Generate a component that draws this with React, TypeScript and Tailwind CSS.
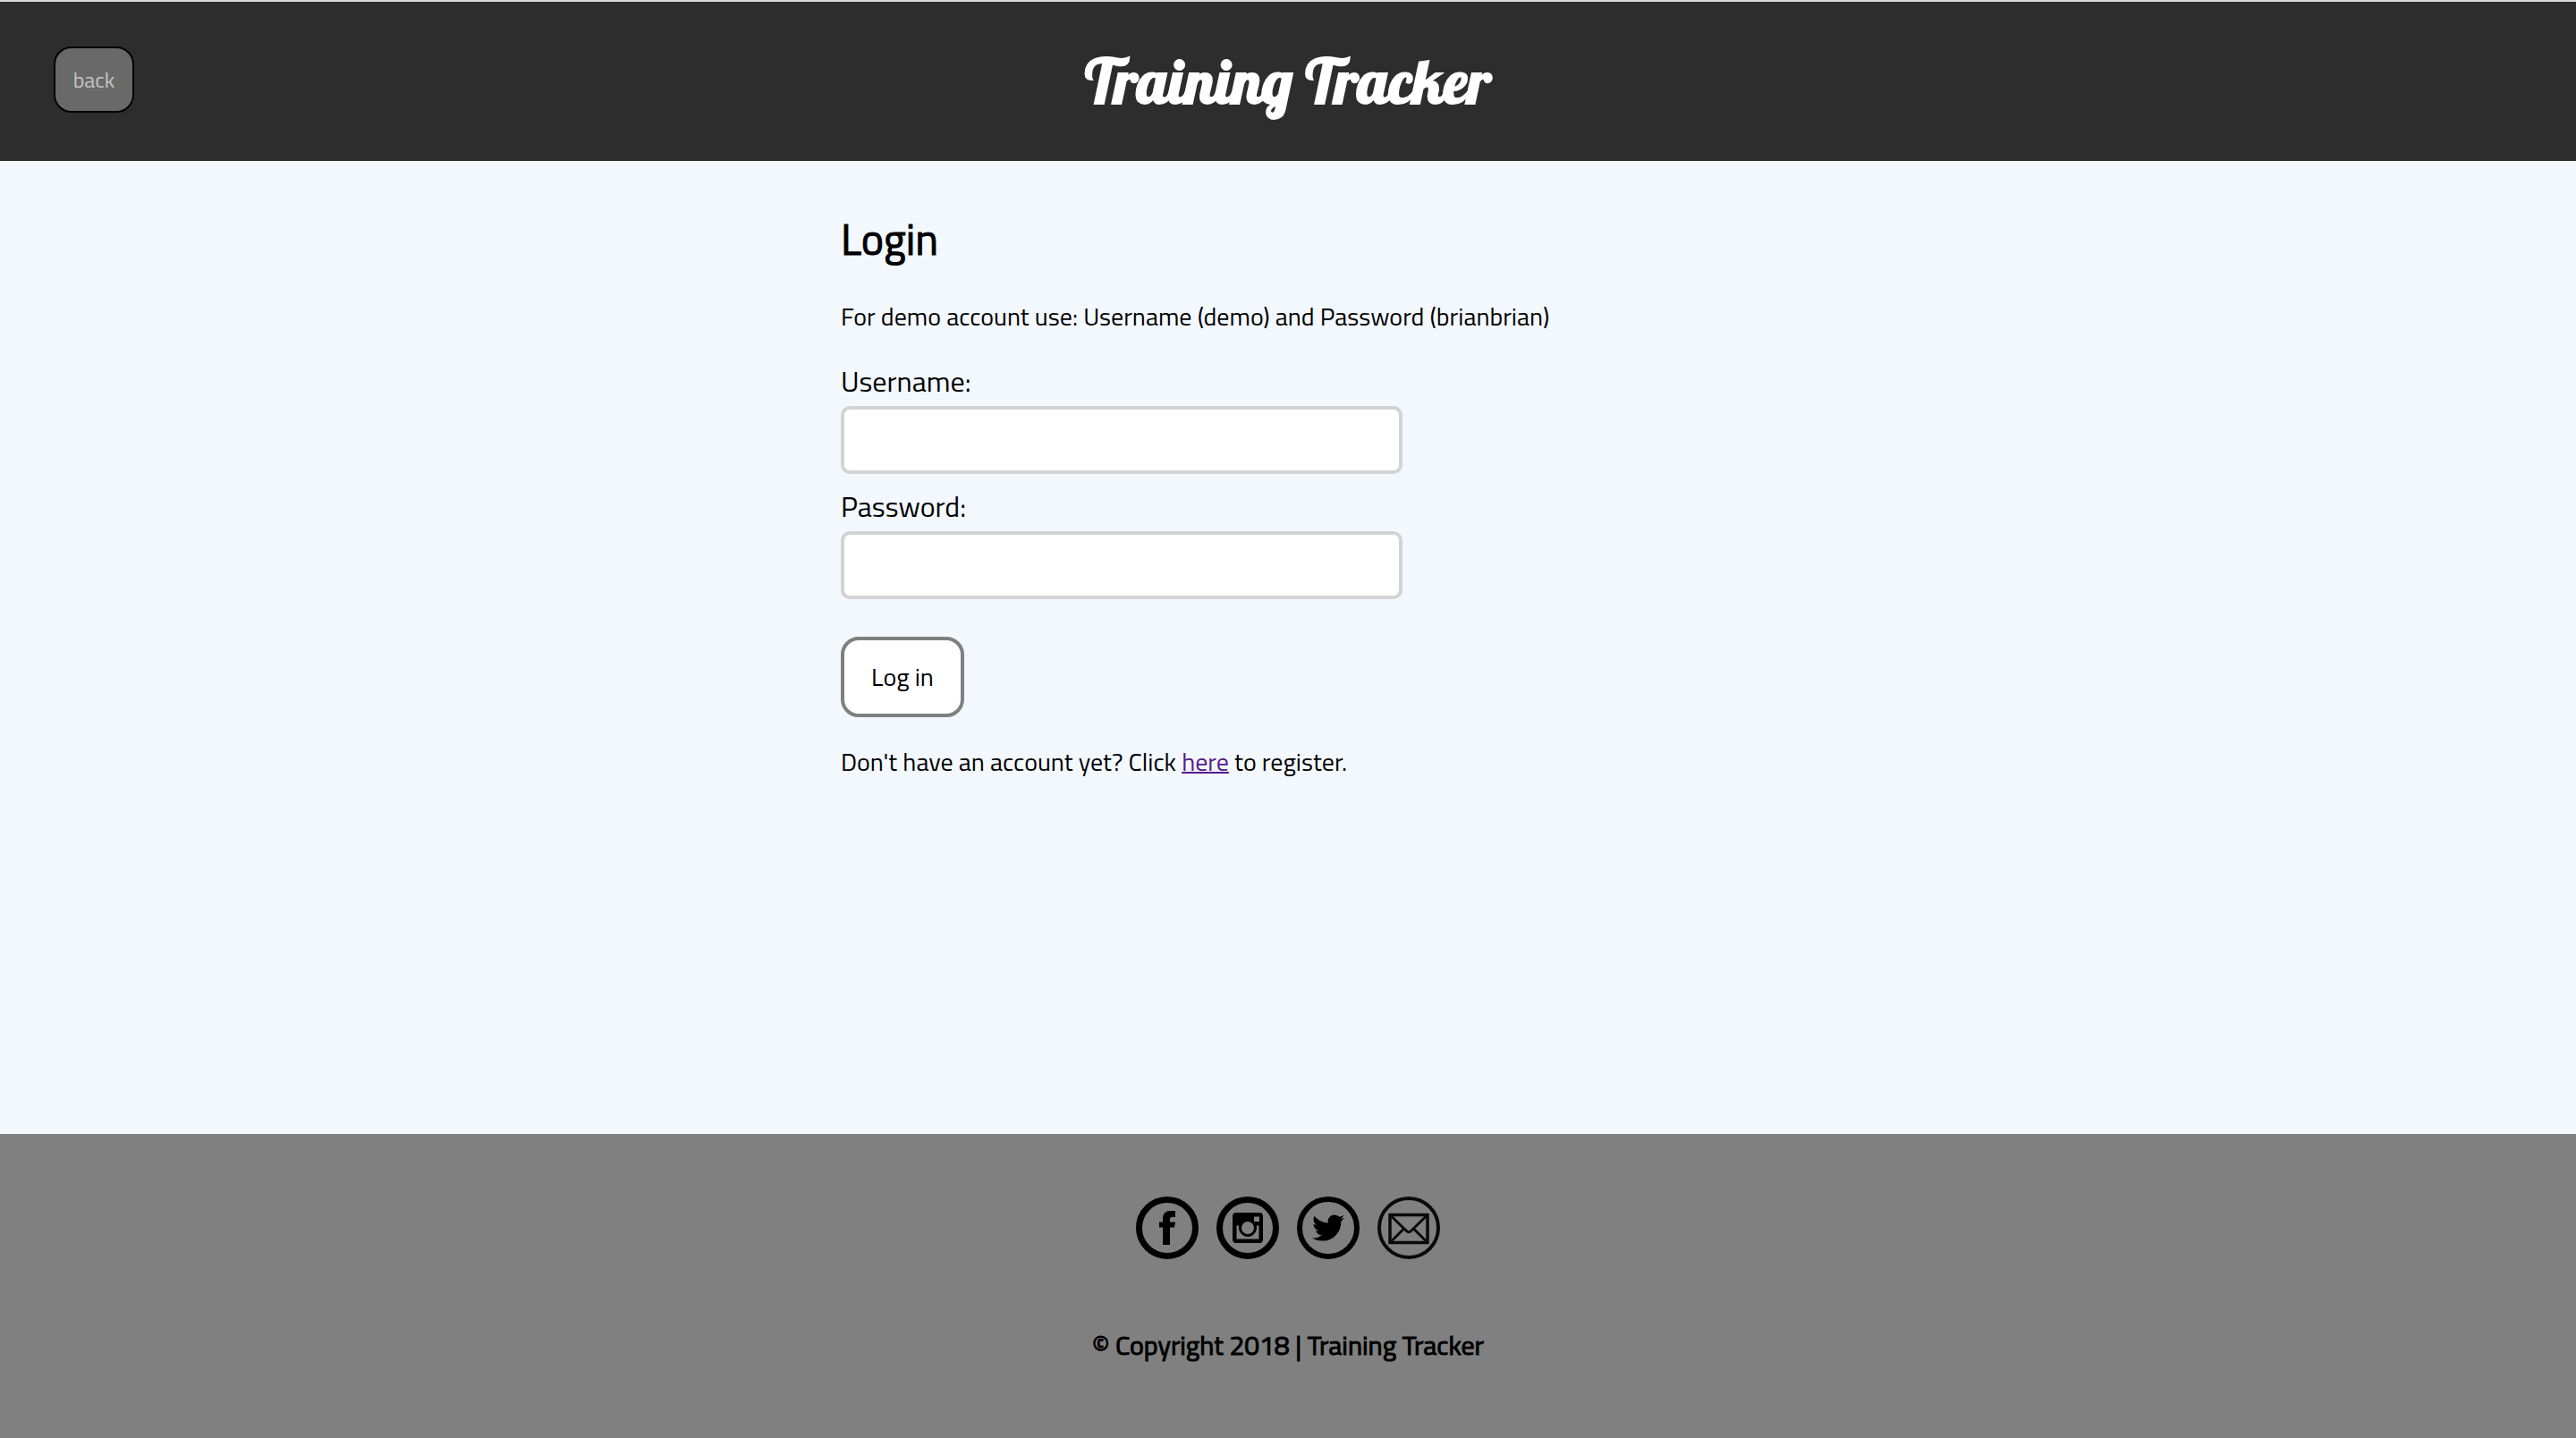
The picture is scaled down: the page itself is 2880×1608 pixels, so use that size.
import type { ReactNode } from "react";
import { FaTwitter } from "react-icons/fa";

function FacebookIcon() {
  return (
    <svg viewBox="0 0 70 70" className="size-full" aria-hidden="true">
      <circle cx="35" cy="35" r="31.5" fill="none" stroke="#000" strokeWidth="7" />
      <path d="M30 54V34.500h-4v-6h4v-4q0-8.500 8.500-8.500h5.500v7h-3.500q-2.500 0-2.500 2.500v3h6l-1 6h-5V54z" />
    </svg>
  );
}

function InstagramIcon() {
  return (
    <svg viewBox="0 0 70 70" className="size-full" aria-hidden="true">
      <circle cx="35" cy="35" r="31.5" fill="none" stroke="#000" strokeWidth="7" />
      <path
        fillRule="evenodd"
        d="M22 18h26q4 0 4 4v26q0 4-4 4H22q-4 0-4-4V22q0-4 4-4zM42 22.500v5.500h6v-5.500zM22.500 32.500V47.500H47.500V32.500h-2.800A10 10 0 1 1 25.300 32.500zM35 28a7 7 0 1 0 0 14a7 7 0 1 0 0-14z"
      />
    </svg>
  );
}

function TwitterIcon() {
  return (
    <span className="flex size-full items-center justify-center rounded-full border-[6px] border-black">
      <FaTwitter className="size-9" aria-hidden="true" />
    </span>
  );
}

function MailIcon() {
  return (
    <svg viewBox="0 0 70 70" className="size-full" fill="none" stroke="#0a0a0a" aria-hidden="true">
      <circle cx="35" cy="35" r="33" strokeWidth="4" />
      <path strokeWidth="3.5" d="M14 20.500h42v31H14z" />
      <path strokeWidth="3" d="M14 20.500l18.500 18q2.500 2.500 5 0L56 20.500M14 51.500l15-15M56 51.500l-15-15" />
    </svg>
  );
}

function SocialLink({ label, children }: { label: string; children: ReactNode }) {
  return (
    <a href="#" aria-label={label} className="block size-[70px] text-black">
      {children}
    </a>
  );
}

function Field({ id, label, type }: { id: string; label: string; type: string }) {
  return (
    <div className="flex flex-col">
      <label htmlFor={id} className="text-[32px] leading-[48px]">
        {label}
      </label>
      <input
        id={id}
        type={type}
        className="mt-1 h-[76px] w-full max-w-[628px] rounded-[10px] border-4 border-[#d3d3d3] bg-white px-4 text-[28px]"
      />
    </div>
  );
}

export default function App() {
  return (
    <div className="flex min-h-screen flex-col bg-[#f3f8ff] font-['Titillium_Web',Roboto,sans-serif] text-[28px] leading-[44px] text-black">
      <header className="grid h-[180px] grid-cols-[1fr_auto_1fr] items-center border-t-2 border-[#d8dadb] bg-[#2d2d2d] px-[60px]">
        <button
          type="button"
          className="mb-1 h-[74px] w-[90px] rounded-[20px] border-2 border-black bg-[#696969] text-[24px] text-[#c4c4c4]"
        >
          back
        </button>
        <h1 className="font-['Lobster',Lato,sans-serif] text-[68px] leading-[80px] font-bold text-white">
          Training Tracker
        </h1>
      </header>

      <main className="mx-auto w-full max-w-[1000px] flex-1 pt-14">
        <h2 className="text-[48px] leading-[64px] font-normal [-webkit-text-stroke:1px_#000]">Login</h2>
        <p className="mt-8">For demo account use: Username (demo) and Password (brianbrian)</p>
        <form className="mt-[26px]" onSubmit={(event) => event.preventDefault()}>
          <div className="flex flex-col gap-3">
            <Field id="username" label="Username:" type="text" />
            <Field id="password" label="Password:" type="password" />
          </div>
          <button
            type="submit"
            className="mt-[42px] h-[90px] w-[138px] rounded-[20px] border-4 border-[#808080] bg-white text-[28px]"
          >
            Log in
          </button>
        </form>
        <p className="mt-7">
          Don't have an account yet? Click{" "}
          <a href="#" className="text-[#551a8b] underline decoration-2">
            here
          </a>{" "}
          to register.
        </p>
      </main>

      <footer className="flex h-[340px] flex-col items-center bg-[#808080] pt-[70px]">
        <nav aria-label="Social links" className="flex gap-5">
          <SocialLink label="Facebook">
            <FacebookIcon />
          </SocialLink>
          <SocialLink label="Instagram">
            <InstagramIcon />
          </SocialLink>
          <SocialLink label="Twitter">
            <TwitterIcon />
          </SocialLink>
          <SocialLink label="Email">
            <MailIcon />
          </SocialLink>
        </nav>
        <p className="mt-18 text-[30px] leading-[48px] [-webkit-text-stroke:1px_#000]">
          © Copyright 2018 | Training Tracker
        </p>
      </footer>
    </div>
  );
}
